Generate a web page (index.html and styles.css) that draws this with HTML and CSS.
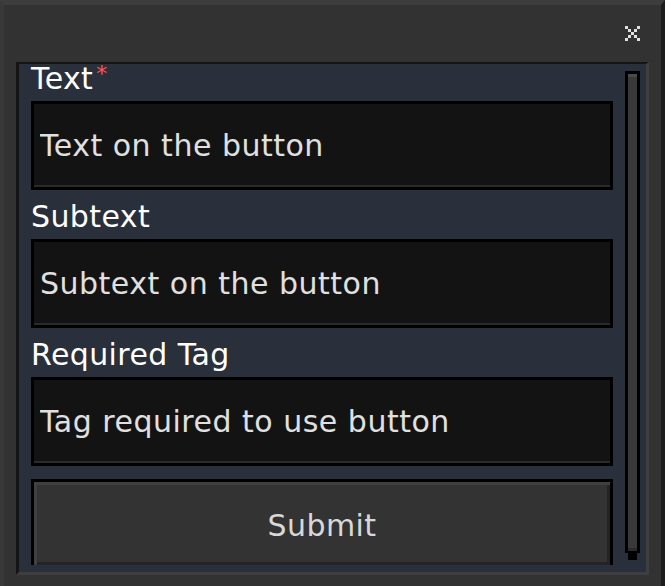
FILE: index.html
```html
<!DOCTYPE html>
<html lang="en">
<head>
<meta charset="utf-8">
<title>Button settings</title>
<link rel="stylesheet" href="styles.css">
</head>
<body>
<div class="window">
  <div class="header">
    <button class="close" aria-label="Close">
      <svg width="15" height="15" viewBox="0 0 5 5" shape-rendering="crispEdges" aria-hidden="true">
        <path d="M0 0h1v1H0zM4 0h1v1H4zM1 1h1v1H1zM3 1h1v1H3zM2 2h1v1H2zM1 3h1v1H1zM3 3h1v1H3zM0 4h1v1H0zM4 4h1v1H4z" fill="#e0e0e0"/>
      </svg>
    </button>
  </div>
  <div class="panel">
    <div class="content">
      <div class="field">
        <label class="label" for="f-text">Text<span class="req">*</span></label>
        <input class="input" id="f-text" type="text" placeholder="Text on the button">
      </div>
      <div class="field">
        <label class="label" for="f-sub">Subtext</label>
        <input class="input" id="f-sub" type="text" placeholder="Subtext on the button">
      </div>
      <div class="field">
        <label class="label" for="f-tag">Required Tag</label>
        <input class="input" id="f-tag" type="text" placeholder="Tag required to use button">
      </div>
      <button class="submit">Submit</button>
    </div>
    <div class="scrollbar">
      <div class="track"><div class="thumb"></div></div>
      <div class="tail"></div>
    </div>
  </div>
</div>
</body>
</html>
```
FILE: styles.css
```css
* {
  box-sizing: border-box;
  margin: 0;
  padding: 0;
}

html, body {
  width: 665px;
  height: 586px;
  overflow: hidden;
  background: #323232;
}

body {
  font-family: "DejaVu Sans", sans-serif;
  letter-spacing: 0.4px;
}

.window {
  width: 665px;
  height: 586px;
  background: #323232;
  border-top: 5px solid #3d3d3d;
  border-left: 4px solid #393939;
  border-right: 4px solid #1d1d1d;
  padding: 0 12px 11px 12px;
  display: flex;
  flex-direction: column;
}

.header {
  height: 57px;
  flex: none;
  display: flex;
  justify-content: flex-end;
  align-items: flex-start;
  padding-top: 21px;
  padding-right: 9px;
}

.close {
  width: 15px;
  height: 15px;
  border: none;
  background: none;
  display: block;
  cursor: pointer;
}

.close svg {
  display: block;
}

.panel {
  flex: 1;
  min-height: 0;
  display: flex;
  gap: 12px;
  background: #29303b;
  border-top: 2px solid #151515;
  border-left: 3px solid #151515;
  border-right: 3px solid #3e3e3e;
  border-bottom: 3px solid #3e3e3e;
  padding: 0 6px 7px 12px;
}

.content {
  flex: 1;
  min-width: 0;
  display: flex;
  flex-direction: column;
  clip-path: inset(-10px -10px 0 -10px);
}

.field {
  display: flex;
  flex-direction: column;
  margin-bottom: 12px;
  flex: none;
}

.label {
  display: block;
  line-height: 35px;
  margin-top: -3px;
  margin-bottom: 5px;
  font-size: 30px;
  color: #ffffff;
  white-space: nowrap;
}

.req {
  color: #ff5555;
  font-size: 22px;
  vertical-align: top;
  line-height: 22px;
  position: relative;
  top: 2px;
  margin-left: 3px;
}

.input {
  display: block;
  width: 100%;
  height: 89px;
  border: 3px solid #000;
  background: #131313;
  box-shadow: inset 0 -2px 0 #2a2a2a;
  padding: 0 6px;
  font-family: "DejaVu Sans", sans-serif;
  font-size: 30px;
  letter-spacing: 0.5px;
  color: #e0e0e0;
  outline: none;
}

.input::placeholder {
  color: #e0e0e0;
  opacity: 1;
}

.submit {
  flex: none;
  margin-top: 1px;
  width: 100%;
  height: 89px;
  border: 3px solid #000;
  background: #333333;
  box-shadow: inset 3px 3px 0 #404040, inset -3px -3px 0 #242424;
  padding-top: 4px;
  font-family: "DejaVu Sans", sans-serif;
  font-size: 30px;
  letter-spacing: 0.4px;
  color: #d8d8d8;
  text-align: center;
  cursor: pointer;
}

.scrollbar {
  flex: none;
  width: 15px;
  margin-top: 7px;
  display: flex;
  flex-direction: column;
}

.track {
  width: 15px;
  height: 482px;
  border: 3px solid #000;
  border-bottom-width: 2px;
}

.thumb {
  height: 100%;
  background: #393939;
  border-top: 3px solid #4b4b4b;
  border-bottom: 3px solid #2b2b2b;
}

.tail {
  width: 9px;
  height: 7px;
  margin-left: 3px;
  background: #000;
}
```
